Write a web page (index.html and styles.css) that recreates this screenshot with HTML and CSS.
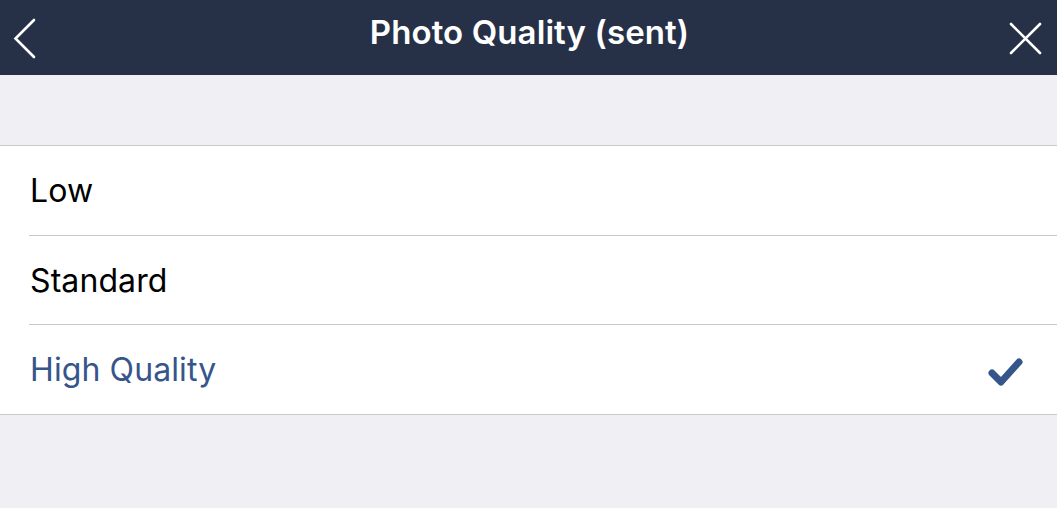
FILE: index.html
```html
<!DOCTYPE html>
<html>
<head>
<meta charset="utf-8">
<link rel="stylesheet" href="styles.css">
</head>
<body>
<header class="nav">
  <button class="nav-btn back" aria-label="Back">
    <svg width="40" height="60" viewBox="0 0 40 60"><polyline points="34,12 15.5,30.5 34,49" fill="none" stroke="#fff" stroke-width="2.6" stroke-linecap="round" stroke-linejoin="miter"/></svg>
  </button>
  <h1 class="title">Photo Quality (sent)</h1>
  <button class="nav-btn close" aria-label="Close">
    <svg width="40" height="60" viewBox="0 0 40 60"><path d="M5 16 L34 45 M34 16 L5 45" fill="none" stroke="#fff" stroke-width="2.6" stroke-linecap="round"/></svg>
  </button>
</header>
<main class="content">
  <div class="spacer"></div>
  <ul class="list">
    <li class="row"><span class="label">Low</span></li>
    <li class="row"><span class="label">Standard</span></li>
    <li class="row selected"><span class="label">High Quality</span>
      <svg class="check" width="44" height="40" viewBox="0 0 44 40"><polyline points="7,20 16,29 34,9" fill="none" stroke="#36558b" stroke-width="7" stroke-linecap="round" stroke-linejoin="round"/></svg>
    </li>
  </ul>
</main>
</body>
</html>
```

FILE: styles.css
```css
* { box-sizing: border-box; }
html, body { margin: 0; padding: 0; }
body {
  width: 1057px;
  height: 508px;
  overflow: hidden;
  background: #efeff4;
  font-family: Inter, "Noto Sans", sans-serif;
}
.nav {
  height: 75px;
  background: #263148;
  display: flex;
  align-items: center;
  justify-content: space-between;
  position: relative;
}
.nav-btn {
  background: none;
  border: 0;
  padding: 0;
  width: 40px;
  height: 60px;
  display: flex;
}
.back { margin-left: 0; }
.close { margin-right: 11px; }
.title {
  position: absolute;
  left: 0;
  right: 0;
  top: 0;
  height: 63px;
  margin: 0;
  padding-left: 2px;
  display: flex;
  align-items: center;
  justify-content: center;
  color: #fff;
  font-size: 33px;
  font-weight: 600;
  letter-spacing: 0.1px;
  pointer-events: none;
}
.spacer { height: 70px; }
.list {
  list-style: none;
  margin: 0;
  padding: 0 0 0 29px;
  background: #fff;
  border-top: 1px solid #c8c7cc;
  border-bottom: 1px solid #c8c7cc;
}
.row {
  height: 89px;
  display: flex;
  align-items: center;
  justify-content: space-between;
  padding-right: 30px;
  border-bottom: 1px solid #c8c7cc;
  font-size: 32px;
  letter-spacing: 0.1px;
  color: #000;
}
.row:first-child { height: 90px; }
.row:last-child { border-bottom: 0; }
.label { padding-left: 1px; }
.selected { color: #36558b; }
.check { display: block; margin-top: 6px; margin-right: -2px; }
```
